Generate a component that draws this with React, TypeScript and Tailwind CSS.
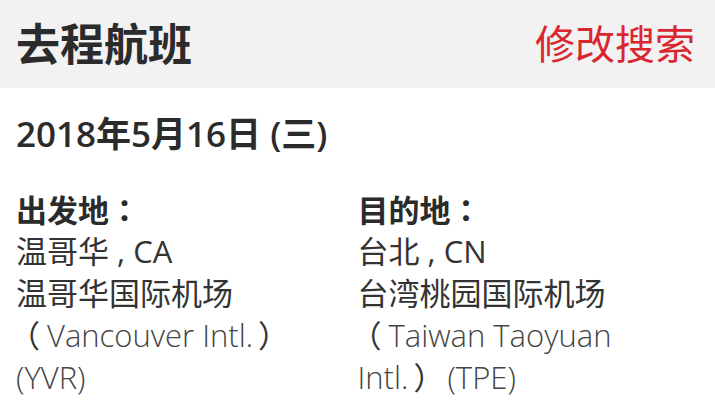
const font = "font-['Open_Sans','Noto_Sans_CJK_SC',sans-serif]";

type Place = {
  label: string;
  city: string;
  airport: string;
  english: string;
  code: string;
};

const places: Place[] = [
  {
    label: "出发地",
    city: "温哥华 , CA",
    airport: "温哥华国际机场",
    english: "Vancouver Intl.",
    code: "(YVR)",
  },
  {
    label: "目的地",
    city: "台北 , CN",
    airport: "台湾桃园国际机场",
    english: "Taiwan Taoyuan Intl.",
    code: "(TPE)",
  },
];

export default function App() {
  return (
    <div className={`${font} w-[715px] h-[414px] overflow-hidden bg-white text-[#333]`}>
      {/* Header bar */}
      <div className="h-[88px] bg-[#f2f2f2] pl-4 pr-5 flex items-center justify-between">
        <h1 className="text-[44px] font-bold leading-none text-[#2b2b2b]">去程航班</h1>
        <a className="text-[40px] leading-none text-[#d9262f]">修改搜索</a>
      </div>

      <div className="px-4">
        <div className="pt-[24px] text-[35px] font-semibold leading-[44px] text-[#2b2b2b]">
          2018年5月16日 (三)
        </div>

        <div className="grid grid-cols-2 mt-[33px]">
          {places.map((p) => (
            <div key={p.label} className="text-[31px] leading-[42px]">
              <div className="font-bold leading-[40px] text-[#2b2b2b]">
                {p.label}
                <span className="font-['Noto_Sans_CJK_TC',sans-serif]">：</span>
              </div>
              <div>{p.city}</div>
              <div>{p.airport}</div>
              <div>
                {/* the reference centres full-width brackets in their cell */}
                <span className="relative -left-[7px]">（</span>
                <span className="font-light text-[#444]">{p.english}</span>
                <span className="relative left-[5px]">）</span>
                <span className="font-light text-[#444]"> {p.code}</span>
              </div>
            </div>
          ))}
        </div>
      </div>
    </div>
  );
}
